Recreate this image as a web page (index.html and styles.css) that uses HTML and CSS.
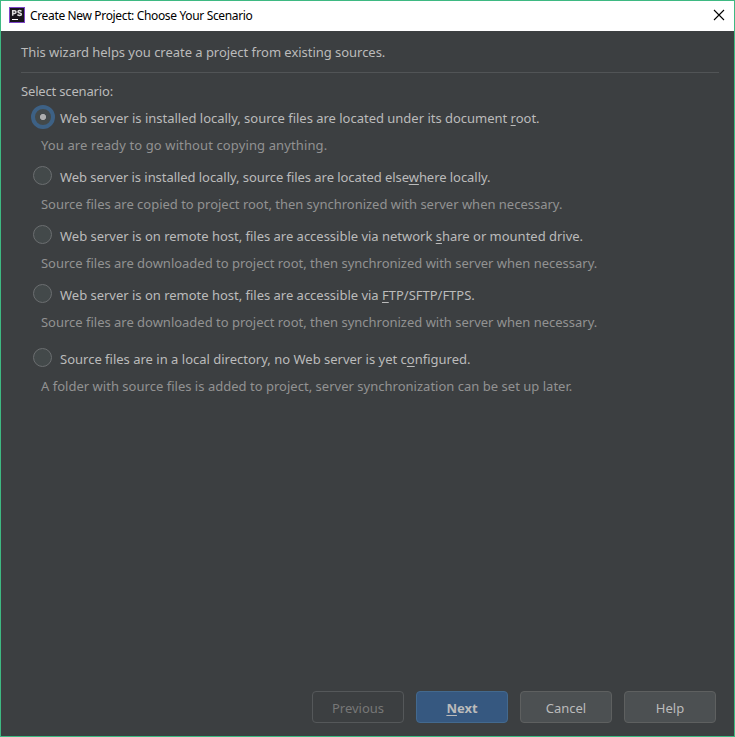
FILE: index.html
```html
<!DOCTYPE html>
<html lang="en">
<head>
<meta charset="utf-8">
<title>Create New Project: Choose Your Scenario</title>
<link rel="stylesheet" href="styles.css">
</head>
<body>
<div class="window">
  <header class="titlebar">
    <svg class="logo" width="16" height="16" viewBox="0 0 16 16">
      <rect width="16" height="16" fill="#7d45c8"/>
      <rect x="1" y="1" width="14" height="14" fill="#17151b"/>
      <path d="M3.7 8.7V3.7H5.6Q7 3.7 7 5.1Q7 6.5 5.6 6.5H3.7M12.5 4.3Q11.6 3.6 10.4 3.6Q9 3.6 9 4.7Q9 5.6 10.6 5.9Q12.4 6.2 12.4 7.2Q12.4 8.4 10.6 8.4Q9.4 8.4 8.4 7.7" fill="none" stroke="#dedede" stroke-width="1.5"/>
      <rect x="3" y="12" width="6" height="1" fill="#fff"/>
    </svg>
    <h1 class="title">Create New Project: Choose Your Scenario</h1>
    <svg class="close" width="10" height="10" viewBox="0 0 10 10"><path d="M0 0L10 10M10 0L0 10" stroke="#000" stroke-width="1.1"/></svg>
  </header>
  <main class="content">
    <p class="intro">This wizard helps you create a project from existing sources.</p>
    <p class="prompt">Select scenario:</p>
    <div class="option">
      <div class="choice"><i class="radio selected"></i><span class="snug">Web server is installed locally, source files are located under its document <u>r</u>oot.</span></div>
      <p class="hint loose">You are ready to go without copying anything.</p>
    </div>
    <div class="option">
      <div class="choice"><i class="radio"></i><span class="tight">Web server is installed locally, source files are located else<u>w</u>here locally.</span></div>
      <p class="hint snug">Source files are copied to project root, then synchronized with server when necessary.</p>
    </div>
    <div class="option">
      <div class="choice"><i class="radio"></i><span class="snug">Web server is on remote host, files are accessible via network <u>s</u>hare or mounted drive.</span></div>
      <p class="hint snug">Source files are downloaded to project root, then synchronized with server when necessary.</p>
    </div>
    <div class="option">
      <div class="choice"><i class="radio"></i><span class="snug">Web server is on remote host, files are accessible via <u>F</u>TP/SFTP/FTPS.</span></div>
      <p class="hint snug">Source files are downloaded to project root, then synchronized with server when necessary.</p>
    </div>
    <div class="option separate">
      <div class="choice"><i class="radio"></i><span>Source files are in a local directory, no Web server is yet c<u>o</u>nfigured.</span></div>
      <p class="hint roomy">A folder with source files is added to project, server synchronization can be set up later.</p>
    </div>
  </main>
  <footer class="actions">
    <button class="button disabled">Previous</button>
    <button class="button primary"><span><u>N</u>ext</span></button>
    <button class="button">Cancel</button>
    <button class="button">Help</button>
  </footer>
</div>
</body>
</html>
```
FILE: styles.css
```css
* { box-sizing: border-box; }
body { margin: 0; font: 13px/18px "Noto Sans", "Open Sans", sans-serif; color: #bbb; }
p, h1 { margin: 0; }
.window { display: flex; flex-direction: column; width: 735px; height: 737px; border: 1px solid #3eb982; background: #3c3f41; white-space: nowrap; }
.titlebar { display: flex; align-items: center; height: 30px; padding: 0 10px 0 8px; background: #fff; color: #000; }
.logo { margin-top: -2px; }
.title { flex: 1; margin-left: 5px; font-size: 12px; font-weight: 400; letter-spacing: -.35px; }
.close { overflow: visible; margin: 0 0 2px; }
.content { flex: 1; padding: 0 15px 0 20px; }
.intro { height: 42px; padding-top: 12px; border-bottom: 1px solid #515456; letter-spacing: -.035px; }
.prompt { height: 31px; padding-top: 9px; letter-spacing: -.17px; }
.option { height: 59px; }
.option.separate { margin-top: 5px; }
.choice { display: flex; align-items: center; gap: 8px; height: 27px; padding-left: 12px; }
.radio { width: 19px; height: 19px; border: 1px solid #6b6e70; border-radius: 50%; background: #43494a; position: relative; top: -1px; }
.selected { width: 24px; height: 24px; margin: 0 -3px 0 -2px; border: 4px solid #3d6185; background: radial-gradient(circle, #adadad 0 2.7px, #43494a 3.5px); }
.hint { height: 27px; padding: 5px 0 0 20px; color: #929292; }
.tight { letter-spacing: -.055px; }
.snug { letter-spacing: -.014px; }
.roomy { letter-spacing: .016px; }
.loose { letter-spacing: .115px; }
u { text-underline-offset: 2px; text-decoration-thickness: 1px; text-decoration-skip-ink: none; }
.actions { display: flex; justify-content: flex-end; gap: 12px; height: 45px; padding-right: 18px; }
.button { width: 92px; height: 32px; padding: 2px 0 0; border: 1px solid #5e6060; border-radius: 4px; background: #4c5052; color: #bbb; font: inherit; }
.disabled { background: transparent; border-color: #55585a; color: #777; }
.primary { background: #365880; border-color: #43698e; font-weight: 700; }
```
